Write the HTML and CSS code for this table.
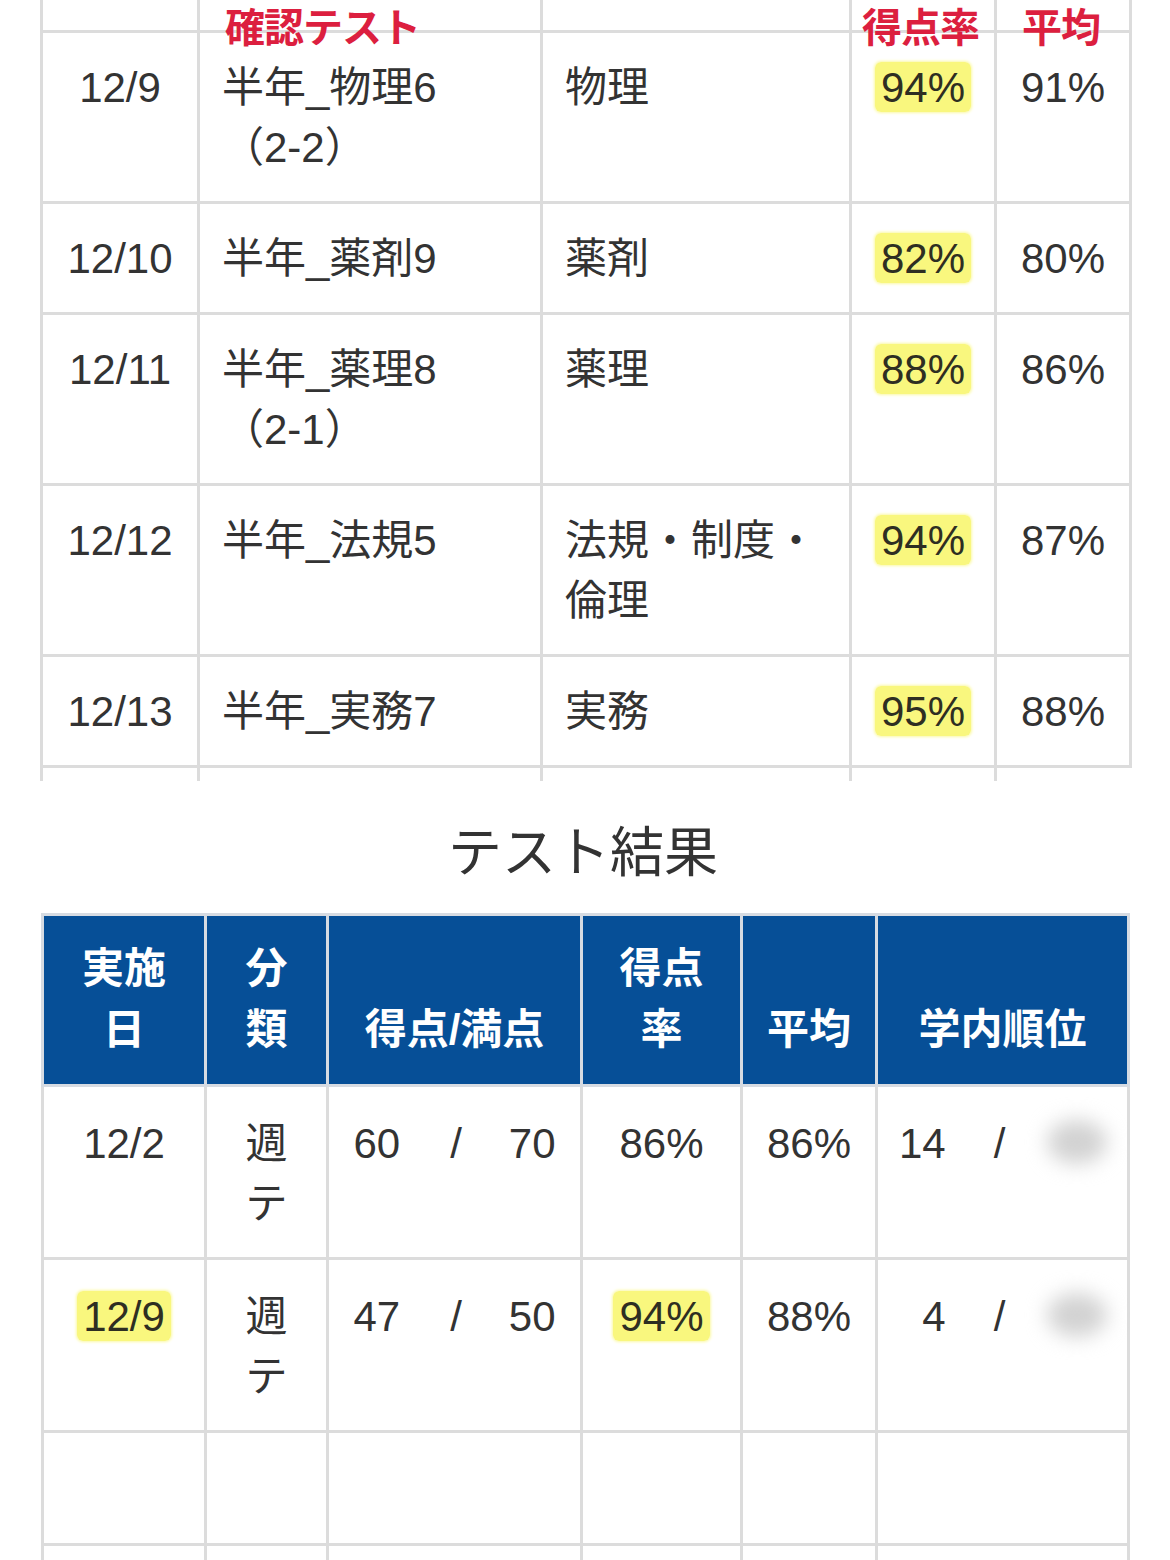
FILE: index.html
```html
<!DOCTYPE html>
<html lang="ja">
<head>
<meta charset="utf-8">
<title>テスト結果</title>
<link rel="stylesheet" href="styles.css">
</head>
<body>
<div class="page">
  <div class="schedule-wrap">
    <table class="schedule">
      <colgroup>
        <col class="c-date"><col class="c-name"><col class="c-subj"><col class="c-rate"><col class="c-avg">
      </colgroup>
      <tr class="head-stub"><td></td><td></td><td></td><td></td><td></td></tr>
      <tr>
        <td class="center">12/9</td>
        <td>半年_物理6<br>（2-2）</td>
        <td>物理</td>
        <td class="center"><span class="mark">94%</span></td>
        <td class="center">91%</td>
      </tr>
      <tr>
        <td class="center">12/10</td>
        <td>半年_薬剤9</td>
        <td>薬剤</td>
        <td class="center"><span class="mark">82%</span></td>
        <td class="center">80%</td>
      </tr>
      <tr>
        <td class="center">12/11</td>
        <td>半年_薬理8<br>（2-1）</td>
        <td>薬理</td>
        <td class="center"><span class="mark">88%</span></td>
        <td class="center">86%</td>
      </tr>
      <tr>
        <td class="center">12/12</td>
        <td>半年_法規5</td>
        <td>法規・制度・倫理</td>
        <td class="center"><span class="mark">94%</span></td>
        <td class="center">87%</td>
      </tr>
      <tr>
        <td class="center">12/13</td>
        <td>半年_実務7</td>
        <td>実務</td>
        <td class="center"><span class="mark">95%</span></td>
        <td class="center">88%</td>
      </tr>
      <tr class="tail-stub"><td></td><td></td><td></td><td></td><td class="last"></td></tr>
    </table>
    <span class="note note-test">確認テスト</span>
    <span class="note note-rate">得点率</span>
    <span class="note note-avg">平均</span>
  </div>

  <h2 class="title">テスト結果</h2>

  <table class="results">
    <colgroup>
      <col class="r-date"><col class="r-kind"><col class="r-score"><col class="r-rate"><col class="r-avg"><col class="r-rank">
    </colgroup>
    <tr>
      <th>実施<br>日</th>
      <th>分<br>類</th>
      <th>得点/満点</th>
      <th>得点<br>率</th>
      <th>平均</th>
      <th>学内順位</th>
    </tr>
    <tr>
      <td>12/2</td>
      <td>週<br>テ</td>
      <td><span>60</span><span class="sep">/</span><span class="total">70</span></td>
      <td>86%</td>
      <td>86%</td>
      <td><span class="num">14</span><span class="slash">/</span><span class="blur"></span></td>
    </tr>
    <tr>
      <td><span class="mark">12/9</span></td>
      <td>週<br>テ</td>
      <td><span>47</span><span class="sep">/</span><span class="total">50</span></td>
      <td><span class="mark">94%</span></td>
      <td>88%</td>
      <td><span class="num">4</span><span class="slash">/</span><span class="blur"></span></td>
    </tr>
    <tr class="empty"><td></td><td></td><td></td><td></td><td></td><td></td></tr>
    <tr class="empty"><td></td><td></td><td></td><td></td><td></td><td></td></tr>
  </table>
</div>
</body>
</html>
```

FILE: styles.css
```css
html, body {
  margin: 0;
  padding: 0;
  background: #ffffff;
}

body {
  font-family: "Liberation Sans", "Noto Sans CJK JP", sans-serif;
  color: #333333;
  width: 1170px;
  overflow: hidden;
}

.page {
  width: 1170px;
}

/* ---------- top table ---------- */
.schedule-wrap {
  position: relative;
  margin-left: 40px;
  width: 1089px;
}

.schedule {
  border-collapse: collapse;
  table-layout: fixed;
  width: 1089px;
  font-size: 42px;
  line-height: 60px;
}

.c-date { width: 157px; }
.c-name { width: 343px; }
.c-subj { width: 309px; }
.c-rate { width: 145px; }
.c-avg  { width: 135px; }

.schedule td {
  border: 3px solid #dcdcdc;
  padding: 25px 24px 23px 22px;
  vertical-align: top;
  text-align: left;
}

.schedule td.center {
  text-align: center;
  padding-left: 6px;
  padding-right: 6px;
}

.schedule .head-stub td {
  border-top: none;
  height: 30px;
  padding: 0;
}

.schedule .tail-stub td {
  border-bottom: none;
  height: 13px;
  padding: 0;
}

.schedule .tail-stub td.last {
  border-right: none;
}

.note {
  position: absolute;
  top: 6px;
  font-size: 40px;
  line-height: 44px;
  font-weight: 700;
  color: #dc1f3f;
  white-space: nowrap;
  letter-spacing: -1px;
}

.note-test { left: 185px; }
.note-rate { left: 822px; }
.note-avg  { left: 982px; }

/* ---------- highlight marker ---------- */
.mark {
  background: #f9f77e;
  padding: 2px 6px 1px;
  margin: 0 -6px;
  border-radius: 6px;
  box-shadow: 0 0 3px 1px #fbf9a4;
  color: #2e2e22;
}

/* ---------- title ---------- */
.title {
  margin: 0;
  height: 120px;
  padding-top: 12px;
  line-height: 120px;
  text-align: center;
  font-size: 54px;
  font-weight: 400;
  color: #333333;
  padding-right: 4px;
}

/* ---------- results table ---------- */
.results {
  border-collapse: collapse;
  table-layout: fixed;
  margin-left: 41px;
  width: 1086px;
  font-size: 42px;
  line-height: 60px;
}

.r-date  { width: 163px; }
.r-kind  { width: 122px; }
.r-score { width: 254px; }
.r-rate  { width: 160px; }
.r-avg   { width: 135px; }
.r-rank  { width: 252px; }

.results th {
  background: #064f97;
  color: #ffffff;
  font-weight: 700;
  border: 3px solid #d6dbe2;
  padding: 22px 4px 24px;
  line-height: 61px;
  vertical-align: bottom;
  text-align: center;
}

.results td {
  border: 3px solid #dcdcdc;
  padding: 27px 4px 23px;
  vertical-align: top;
  text-align: center;
  white-space: nowrap;
}

.results tr.empty td {
  height: 60px;
}

.sep {
  display: inline-block;
  margin-left: 50px;
}

.total {
  display: inline-block;
  margin-left: 47px;
}

.num {
  display: inline-block;
  width: 48px;
  text-align: right;
}

.slash {
  display: inline-block;
  margin-left: 48px;
  margin-right: 42px;
}

.blur {
  display: inline-block;
  width: 60px;
  height: 44px;
  vertical-align: -6px;
  border-radius: 50%;
  background: #d2d2d2;
  filter: blur(10px);
}
```
